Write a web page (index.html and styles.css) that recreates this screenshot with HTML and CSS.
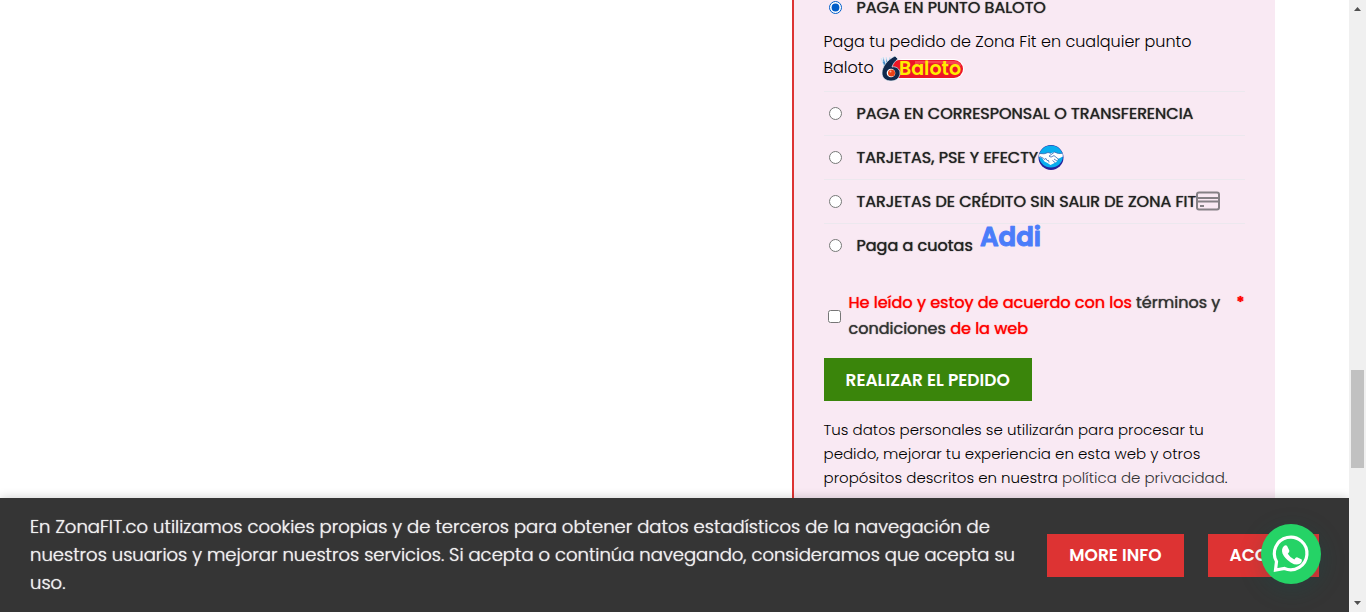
FILE: index.html
```html
<!DOCTYPE html>
<html lang="es">
<head>
<meta charset="utf-8">
<meta name="viewport" content="width=device-width, initial-scale=1">
<title>Finalizar compra - Zona Fit</title>
<link rel="stylesheet" href="styles.css">
</head>
<body>
<div class="window">
  <div class="page">
    <main class="container">
      <form class="order">
        <ul class="methods">
          <li class="method method-open">
            <div class="choice"><input type="radio" name="pay" id="baloto" checked><label for="baloto">PAGA EN PUNTO BALOTO</label></div>
            <p class="detail">Paga tu pedido de Zona Fit en cualquier punto Baloto
              <svg class="baloto" viewBox="0 0 84 28" role="img" aria-label="Baloto">
                <rect x="12" y="4" width="72" height="20" rx="10" fill="#fff"/>
                <rect x="10" y="5" width="73" height="18" rx="9" fill="#ed1626"/>
                <path d="M35 6h40q6 1 6 5-18-4-46-2z" fill="#ff6470" opacity=".6"/>
                <text x="19" y="20" class="baloto-word">Baloto</text>
                <path d="M1 3l3 8 3 4 4-5-1-8-2 6-2-6v7L3 2v5z" fill="#3b87c8" stroke="#d9edf8" stroke-width=".6"/>
                <path d="M15 1C7 5 2 12 2 18c0 5 4 8 9 8 6 0 9-4 9-8s-4-7-8-6c1-3 3-6 6-8z" fill="#10294d" stroke="#e7f1f8" stroke-width=".7"/>
                <circle cx="11" cy="18" r="4.300" fill="#fff"/>
                <circle cx="11.500" cy="18" r="3.500" fill="#e84218"/>
                <circle cx="10.500" cy="16.500" r="1" fill="#ffb79c"/>
              </svg>
            </p>
          </li>
          <li class="method"><div class="choice"><input type="radio" name="pay" id="bank"><label for="bank">PAGA EN CORRESPONSAL O TRANSFERENCIA</label></div></li>
          <li class="method"><div class="choice"><input type="radio" name="pay" id="pse"><label for="pse">TARJETAS, PSE Y EFECTY</label>
            <svg class="icon" viewBox="0 0 26 26" aria-hidden="true">
              <circle cx="13" cy="13.500" r="12.500" fill="#26229a"/>
              <ellipse cx="13" cy="12.500" rx="11.800" ry="11" fill="#09aeef"/>
              <path d="M1.500 9.500q5 1 8.500-1l3 .8 3.500-1.200q4 2.200 8 1.200l.3 3.200-4.800 2.500-1.500 3-3 1.500-3 1.500-3-2-3-1.500-2-3-3.500-2z" fill="#fff"/>
              <path d="M1.500 9.500q5 1 8.500-1l3 .8M24.500 9.300q-4 1-8-1.200l-5.500 4 2 1 3-1.500 5 4M1.800 12.500l4 2M6 15.500l2-1 1 2 1.500 0 .5 2M19 17l-3-2M17.500 19l-3-2.500" fill="none" stroke="#3267b2" stroke-width=".8"/>
            </svg></div></li>
          <li class="method"><div class="choice"><input type="radio" name="pay" id="card"><label for="card">TARJETAS DE CRÉDITO SIN SALIR DE ZONA FIT</label>
            <svg class="icon card" viewBox="0 0 24 20" aria-hidden="true">
              <rect x="1" y="1.500" width="22" height="17" rx="2" fill="none" stroke="#858085" stroke-width="2"/>
              <path d="M1 7h22M1 10.500h22M4 15h4" stroke="#858085" stroke-width="2"/>
            </svg></div></li>
          <li class="method"><div class="choice"><input type="radio" name="pay" id="addi"><label for="addi">Paga a cuotas</label>
            <svg class="addi" viewBox="0 0 66 34" role="img" aria-label="Addi"><text x="0" y="26" class="addi-word">Addi</text></svg></div></li>
        </ul>
        <div class="terms">
          <input type="checkbox" id="terms">
          <label for="terms">He leído y estoy de acuerdo con los <a href="#terminos">términos y condiciones</a> de la web</label>
          <span class="required">*</span>
        </div>
        <button type="button" class="btn btn-order">REALIZAR EL PEDIDO</button>
        <p class="privacy">Tus datos personales se utilizarán para procesar tu pedido, mejorar tu experiencia en esta web y otros propósitos descritos en nuestra <a href="#privacidad">política de privacidad</a>.</p>
      </form>
    </main>
    <section class="cookies" aria-label="Cookies">
      <p class="cookie-text">En ZonaFIT.co utilizamos cookies propias y de terceros para obtener datos estadísticos de la navegación de nuestros usuarios y mejorar nuestros servicios. Si acepta o continúa navegando, consideramos que acepta su uso.</p>
      <div class="cookie-actions">
        <button type="button" class="btn">MORE INFO</button>
        <button type="button" class="btn">ACCEPT</button>
      </div>
    </section>
    <a class="whatsapp" href="#whatsapp" aria-label="WhatsApp">
      <svg viewBox="0 0 60 60" aria-hidden="true">
        <g transform="translate(1.500 .5)">
          <path d="M13 45.500l1-8.500A16.300 16.300 0 1 1 22 44z" fill="none" stroke="#fff" stroke-width="3.200" stroke-linejoin="miter"/>
          <path d="M21.500 21.500q1.500-1.200 3-.3l2.400 5q.2 1.200-1.600 3 2.700 4.300 6.500 5.900 1.500-2.500 2.700-2.400l4.800 2.400q.5 3-2.500 4.500-3.500 1.500-8.600-1.700-6-4-8.200-9-1.500-4.500 1.500-7.400z" fill="#fff"/>
        </g>
      </svg>
    </a>
  </div>
  <div class="scrollbar" aria-hidden="true">
    <svg class="arrow" viewBox="0 0 17 17"><path d="M5 11l3.500-4 3.500 4z" fill="#505050"/></svg>
    <div class="track"><div class="thumb"></div></div>
    <svg class="arrow" viewBox="0 0 17 17"><path d="M5 6l3.500 4L12 6z" fill="#505050"/></svg>
  </div>
</div>
</body>
</html>
```
FILE: styles.css
```css
* { box-sizing: border-box; }
body {
  margin: 0;
  background: #fff;
  color: #000;
  font-family: Poppins, Inter, "Open Sans", sans-serif;
  font-size: 16px;
  font-weight: 300;
}
p, ul { margin: 0; padding: 0; }
ul { list-style: none; }
a { color: #333; text-decoration: none; }
.window {
  display: grid;
  grid-template-columns: 1fr 17px;
  height: 100vh;
  overflow: hidden;
}
.page {
  position: relative;
  height: 100vh;
  overflow: hidden;
}
.container {
  display: flex;
  justify-content: flex-end;
  max-width: 1200px;
  min-height: 100%;
  margin: 0 auto;
}
.order {
  width: 483px;
  max-width: 100%;
  padding: 0 30px 160px;
  border-left: 2px solid #dd3333;
  background: #f9e9f3;
}
.method {
  padding: 8px 0 9px;
  border-top: 1px solid #ece8ee;
}
.method-open {
  padding: 0 0 10px;
  border-top: 0;
}
.choice {
  display: flex;
  align-items: center;
  height: 26px;
  color: #222;
  font-weight: 400;
  text-shadow: 0 0 1px currentColor;
  white-space: nowrap;
}
.method-open .choice { height: 14px; }
.choice input { flex: none; width: 13px; height: 13px; margin: 0 15px 0 5px; }
.choice input, .terms input { accent-color: #005cc8; }
.detail {
  padding-top: 15px;
  line-height: 26px;
}
.baloto {
  width: 84px;
  height: 28px;
  margin: -2px 0 -2px 2px;
  vertical-align: middle;
}
.baloto-word { fill: #ffed00; font: 600 19px Poppins, sans-serif; }
.icon { width: 26px; height: 26px; }
.card { width: 24px; height: 20px; }
.addi { width: 66px; height: 34px; margin: 0 0 16px 7px; }
.addi-word {
  fill: #4b7dfa;
  stroke: #4b7dfa;
  stroke-width: 1px;
  stroke-linejoin: round;
  font: 600 26px Poppins, sans-serif;
  text-shadow: none;
}
.terms {
  display: flex;
  align-items: center;
  margin: 23px 0 16px;
  color: #f00;
  font-weight: 400;
  line-height: 26px;
  text-shadow: 0 0 1px currentColor;
}
.terms input { flex: none; width: 13px; height: 13px; margin: 0 8px 0 4px; }
.terms label { flex: 1; }
.required { align-self: flex-start; font-weight: 600; }
.btn {
  height: 43px;
  padding: 0 22px;
  border: 0;
  background: #dd3333;
  color: #fff;
  font: inherit;
  font-size: 17px;
  font-weight: 600;
  white-space: nowrap;
}
.btn-order { background: #3a850b; }
.privacy {
  padding-top: 17px;
  font-size: 15px;
  line-height: 24px;
}
.cookies {
  position: absolute;
  right: 0;
  bottom: 0;
  left: 0;
  display: flex;
  align-items: center;
  justify-content: space-between;
  gap: 32px;
  padding: 15px 30px;
  background: #353535;
  box-shadow: 0 0 10px rgba(0, 0, 0, .2);
  color: #f0f0f0;
}
.cookie-text {
  font-size: 18px;
  line-height: 28px;
  text-shadow: 0 0 1px currentColor;
}
.cookie-actions { display: flex; flex: none; gap: 24px; }
.whatsapp {
  position: absolute;
  right: 28px;
  bottom: 28px;
  width: 60px;
  height: 60px;
  border-radius: 50%;
  background: #25d366;
  box-shadow: 1px 6px 24px rgba(7, 94, 84, .24);
}
.whatsapp svg { display: block; }
.scrollbar {
  display: flex;
  flex-direction: column;
  background: #f0f0f0;
}
.arrow { flex: none; height: 17px; }
.track {
  display: grid;
  flex: 1;
  grid-template-rows: 353fr 98fr 127fr;
  padding: 0 2px;
}
.thumb { grid-row: 2; background: #c1c1c1; }
```
